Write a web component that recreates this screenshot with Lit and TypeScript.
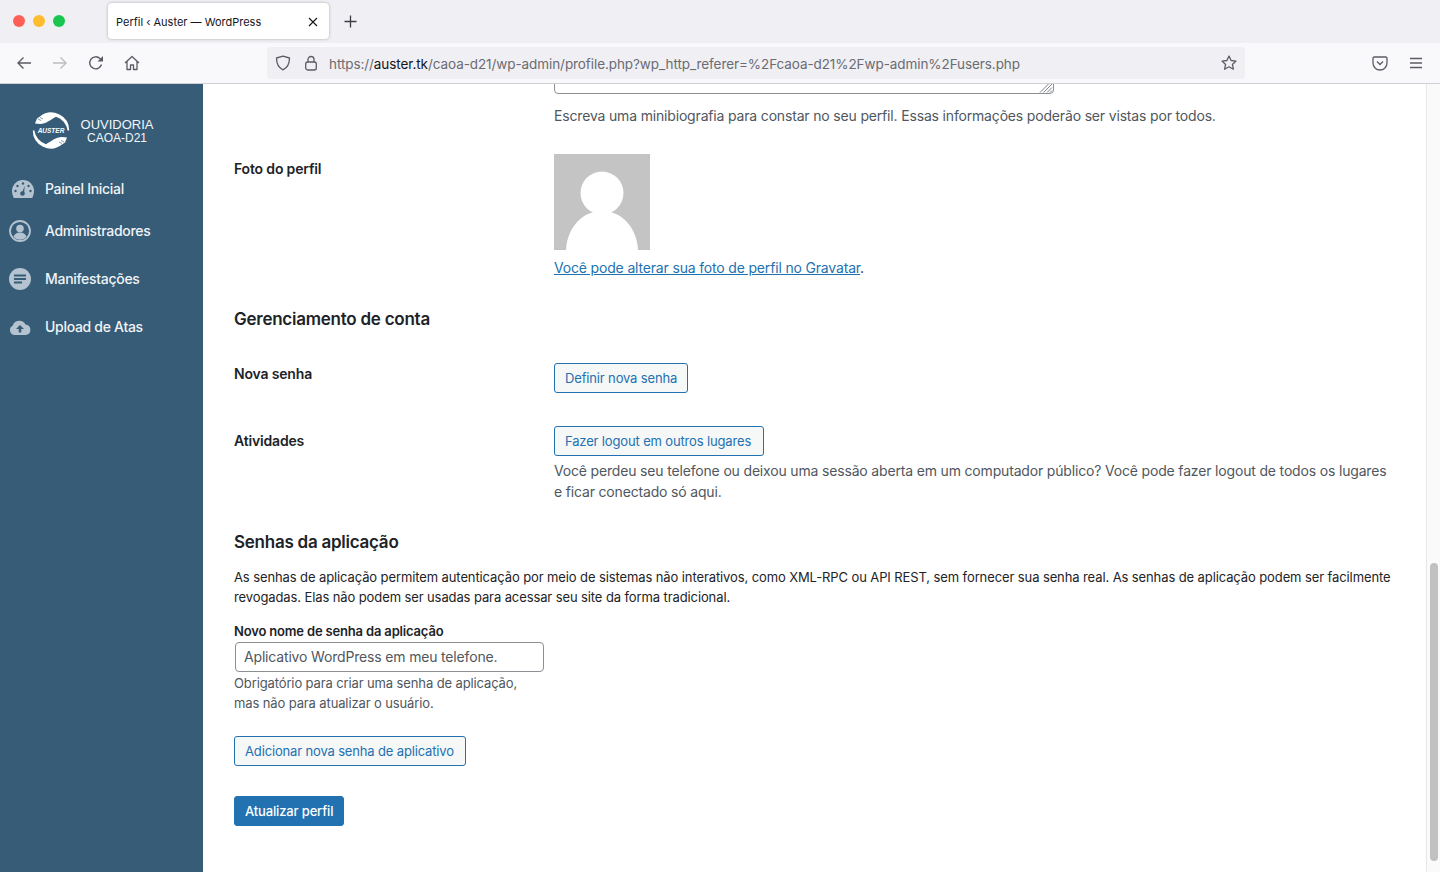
import { LitElement, html, css, svg } from "lit";
import { customElement } from "lit/decorators.js";

@customElement("app-root")
export class AppRoot extends LitElement {
  static styles = css`
    :host { display: block; width: 1440px; height: 872px; overflow: hidden; font-family: Inter, "Liberation Sans", Arial, sans-serif; background: #fff; color: #1d2327; }
    * { box-sizing: border-box; }
    svg { display: block; }

    .tabbar { height: 43px; background: #f0f0f4; display: flex; align-items: flex-start; }
    .lights { display: flex; gap: 8px; padding: 15px 0 0 13px; width: 108px; }
    .light { width: 12px; height: 12px; border-radius: 50%; }
    .tab { width: 221px; height: 36px; margin-top: 3px; background: #fff; border-radius: 4px; box-shadow: 0 0 3px rgba(0,0,0,.3); display: flex; align-items: center; justify-content: space-between; padding: 1px 11px 0 8px; font-size: 11px; color: #15141a; white-space: nowrap; }
    .newtab { margin: 15px 0 0 15px; }

    .toolbar { height: 41px; background: #f9f9fb; border-bottom: 1px solid #cfcfd8; display: flex; align-items: flex-start; }
    .nav { display: flex; width: 267px; padding: 12px 0 0 16px; gap: 20px; }
    .url { width: 978px; height: 32px; margin-top: 4px; background: #f0f0f4; border-radius: 4px; display: flex; align-items: center; padding: 0 8px; color: #6b6b72; white-space: nowrap; }
    .url .domain { color: #15141a; }
    .url .gap1 { margin-left: 12px; }
    .url .text { margin-left: 10px; padding-top: 2px; flex: 1; font-size: 13.5px; letter-spacing: -0.08px; }
    .right { display: flex; padding: 12px 0 0 127px; gap: 20px; }

    .body { display: flex; height: 789px; }
    .side { width: 203px; flex: none; background: #365c78; color: #fff; }
    .logo { display: flex; height: 90px; padding: 25px 0 0 31px; }
    .logotext { margin-left: 9px; padding-top: 9px; width: 74px; text-align: center; font-family: "Liberation Sans", Arial, sans-serif; font-size: 13px; line-height: 14px; color: #f4f6f8; }
    .logotext .sub { font-size: 12px; line-height: 13px; }
    .item { display: flex; align-items: center; padding-left: 9px; font-size: 14px; font-weight: 500; letter-spacing: -0.3px; color: #f0f3f5; height: 24px; }
    .item .ic { width: 36px; flex: none; }
    .item .gauge { padding-left: 3px; }
    .item .t { margin-bottom: 2px; }
    .i1 { margin-top: 3px; } .i2 { margin-top: 18px; } .i3 { margin-top: 24px; } .i4 { margin-top: 24px; }

    .main { flex: 1; overflow: hidden; padding-left: 31px; font-size: 14px; line-height: 21px; letter-spacing: -0.17px; }
    .scroll { width: 14px; flex: none; background: #fafafa; border-left: 1px solid #e8e8e8; position: relative; }
    .thumb { position: absolute; left: 3px; top: 479px; width: 8px; height: 298px; border-radius: 4px; background: #c1c1c1; }

    .row { display: grid; grid-template-columns: 320px 1fr; }
    .lab { font-weight: 600; color: #1d2327; }
    .bio { height: 50px; margin-top: -40px; width: 500px; border: 1px solid #8c8f94; border-radius: 4px; background: #fff; position: relative; }
    .grip { position: absolute; right: 0; bottom: 0; }
    .desc { color: #50575e; margin: 0; }
    .avatar { width: 96px; height: 96px; background: #c4c4c4; margin-top: 28px; }
    a { color: #2271b1; text-decoration: underline; }
    h2 { font-size: 17px; line-height: 24px; font-weight: 600; margin: 0; color: #1d2327; letter-spacing: -0.25px; }
    .btn { display: inline-block; height: 30px; line-height: 28px; padding: 0 10px; border: 1px solid #2271b1; border-radius: 3px; background: #f6f7f7; color: #2271b1; font-size: 13px; font-family: inherit; white-space: nowrap; letter-spacing: -0.15px; }
    .p13 { font-size: 13px; line-height: 20px; margin: 0; color: #1d2327; letter-spacing: -0.105px; }
    .flab { font-size: 13px; line-height: 19px; font-weight: 600; color: #1d2327; }
    .input { width: 309px; height: 30px; margin: 1px 0 0 1px; border: 1px solid #8c8f94; border-radius: 4px; padding: 0 8px; line-height: 28px; font-size: 14px; color: #50575e; background: #fff; }
    .hint { font-size: 13px; line-height: 20px; color: #50575e; margin: 1px 0 0; letter-spacing: -0.12px; }
    .primary { background: #2271b1; color: #fff; font-weight: 500; display: block; width: 110px; }
    .wide { display: block; width: 210px; }
    .addbtn { width: 232px; }
  `;

  private icon(w: number, h: number, vb: string, body: unknown) {
    return html`<svg width=${w} height=${h} viewBox=${vb}>${body}</svg>`;
  }

  render() {
    const stroke = "#5b5b66";
    const crescent = svg`<path d="M4 14.500L6 9.500 9 7.500A18 18 0 0 1 38.200 21.500L36.600 21.500A16.500 16.500 0 0 0 25 7.800C20 10.500 15 15 9 15z" fill="#fff"/>`;
    return html`
      <div class="tabbar">
        <div class="lights">
          <div class="light" style="background:#ff5f57"></div>
          <div class="light" style="background:#febc2e"></div>
          <div class="light" style="background:#19c650"></div>
        </div>
        <div class="tab">
          <span>Perfil ‹ Auster — WordPress</span>
          ${this.icon(10, 10, "0 0 10 10", svg`<path d="M1 1l8 8M9 1l-8 8" stroke="#15141a" stroke-width="1.1" fill="none"/>`)}
        </div>
        <div class="newtab">${this.icon(13, 13, "0 0 13 13", svg`<path d="M6.5 .5v12M.5 6.5h12" stroke="#3c3c44" stroke-width="1.3" fill="none"/>`)}</div>
      </div>

      <div class="toolbar">
        <div class="nav">
          ${this.icon(16, 16, "0 0 16 16", svg`<path d="M15 8H2M7.5 2.500L2 8l5.500 5.500" stroke=${stroke} stroke-width="1.400" fill="none"/>`)}
          ${this.icon(16, 16, "0 0 16 16", svg`<path d="M1 8h13M8.500 2.500L14 8l-5.500 5.500" stroke="#bdbdc2" stroke-width="1.400" fill="none"/>`)}
          ${this.icon(16, 16, "0 0 16 16", svg`<path d="M13.500 9.500A6 6 0 1 1 12 3.600L14 5.500" stroke=${stroke} stroke-width="1.400" fill="none"/><path d="M15 1v5.500H9.500z" fill=${stroke}/>`)}
          ${this.icon(16, 16, "0 0 16 16", svg`<path d="M1 8l7-6.500L15 8M3 6.500V14.500h3.500V10h3v4.500H13V6.500" stroke=${stroke} stroke-width="1.300" fill="none" stroke-linejoin="round"/>`)}
        </div>
        <div class="url">
          ${this.icon(16, 16, "0 0 16 16", svg`<path d="M8 1.200L14.500 3c0 6-1.500 9.500-6.500 11.800C3 12.500 1.500 9 1.500 3z" stroke=${stroke} stroke-width="1.300" fill="none" stroke-linejoin="round"/>`)}
          <span class="gap1">${this.icon(16, 16, "0 0 16 16", svg`<rect x="2.700" y="7" width="10.600" height="8" rx="2" stroke=${stroke} stroke-width="1.300" fill="none"/><path d="M5 7V4.500a3 3 0 0 1 6 0V7" stroke=${stroke} stroke-width="1.300" fill="none"/>`)}</span>
          <span class="text">https://<span class="domain">auster.tk</span>/caoa-d21/wp-admin/profile.php?wp_http_referer=%2Fcaoa-d21%2Fwp-admin%2Fusers.php</span>
          ${this.icon(16, 16, "0 0 16 16", svg`<path d="M8 1l2.100 4.500 4.900.6-3.600 3.300 1 4.800L8 11.800l-4.400 2.400 1-4.800L1 6.100l4.900-.6z" stroke=${stroke} stroke-width="1.300" fill="none" stroke-linejoin="round"/>`)}
        </div>
        <div class="right">
          ${this.icon(16, 16, "0 0 16 16", svg`<path d="M2.500 2h11A1.500 1.500 0 0 1 15 3.500V8a7 7 0 0 1-14 0V3.500A1.500 1.500 0 0 1 2.500 2z" stroke=${stroke} stroke-width="1.300" fill="none"/><path d="M5 6.500l3 3 3-3" stroke=${stroke} stroke-width="1.300" fill="none"/>`)}
          ${this.icon(16, 16, "0 0 16 16", svg`<path d="M2 3.500h12M2 8h12M2 12.500h12" stroke=${stroke} stroke-width="1.300" fill="none"/>`)}
        </div>
      </div>

      <div class="body">
        <div class="side">
          <div class="logo">
            ${this.icon(40, 42, "0 0 40 42", svg`
              ${crescent}
              <g transform="rotate(180 20 21.500)">${crescent}</g>
              <path d="M7 10l3 1.500M9 8.500l3 1.500" stroke="#365c78" stroke-width=".6" fill="none"/>
              <path d="M33 33l-3-1.500M31 34.500l-3-1.500" stroke="#365c78" stroke-width=".6" fill="none"/>
              <text x="20" y="24" text-anchor="middle" font-family="Liberation Sans, Arial, sans-serif" font-size="6.500" font-weight="700" font-style="italic" fill="#fff">AUSTER</text>`)}
            <div class="logotext"><div>OUVIDORIA</div><div class="sub">CAOA-D21</div></div>
          </div>
          <div class="item i1"><span class="ic gauge">${this.icon(22, 18, "0 0 22 18", svg`
            <path d="M11 0a11 11 0 0 1 11 11c0 2.500-.7 4.800-1.800 7H1.800C.7 15.800 0 13.500 0 11A11 11 0 0 1 11 0z" fill="#b4c3cf"/>
            <circle cx="11" cy="3.500" r="1.200" fill="#365c78"/><circle cx="5.500" cy="6" r="1.200" fill="#365c78"/><circle cx="16.500" cy="6" r="1.200" fill="#365c78"/><circle cx="3.500" cy="11" r="1.200" fill="#365c78"/><circle cx="18.500" cy="11" r="1.200" fill="#365c78"/>
            <path d="M12.800 5.500L10 13l2 .8z" fill="#365c78"/><circle cx="10.500" cy="13.500" r="2.300" fill="#365c78"/>`)}</span><span class="t">Painel Inicial</span></div>
          <div class="item i2"><span class="ic">${this.icon(22, 22, "0 0 22 22", svg`
            <circle cx="11" cy="11" r="10" stroke="#b4c3cf" stroke-width="1.800" fill="none"/>
            <circle cx="11" cy="8.500" r="3.800" fill="#b4c3cf"/>
            <path d="M4.500 17c.8-3 3-4.500 6.500-4.500s5.700 1.500 6.500 4.500A9 9 0 0 1 4.500 17z" fill="#b4c3cf"/>`)}</span><span class="t">Administradores</span></div>
          <div class="item i3"><span class="ic">${this.icon(22, 22, "0 0 22 22", svg`
            <circle cx="11" cy="11" r="11" fill="#b4c3cf"/>
            <path d="M5 7.500h12M5 11h12M5 14.500h8" stroke="#365c78" stroke-width="2" fill="none"/>`)}</span><span class="t">Manifestações</span></div>
          <div class="item i4"><span class="ic">${this.icon(22, 16, "0 0 22 16", svg`
            <path d="M5 16A5 5 0 0 1 3.600 6.700 7 7 0 0 1 16.500 5.500 5.300 5.300 0 0 1 17 16z" fill="#b4c3cf"/>
            <path d="M11 6l-4 4h2.700v3.500h2.600V10H15z" fill="#365c78"/>`)}</span><span class="t">Upload de Atas</span></div>
        </div>

        <div class="main">
          <div class="row">
            <div></div>
            <div>
              <div class="bio"><span class="grip">${this.icon(14, 11, "0 0 14 11", svg`<path d="M1 10.500L11 .5M4.500 10.500L13 2M8 10.500L13 5.500M11 10.500L13 8.500" stroke="#6f7378" stroke-width=".9" fill="none"/>`)}</span></div>
              <p class="desc" style="margin-top:11px">Escreva uma minibiografia para constar no seu perfil. Essas informações poderão ser vistas por todos.</p>
            </div>
          </div>

          <div class="row">
            <div class="lab" style="margin-top:32px">Foto do perfil</div>
            <div>
              <div class="avatar">${this.icon(96, 96, "0 0 96 96", svg`
                <circle cx="48" cy="39" r="21.500" fill="#fff"/>
                <path d="M12 96C13 74 28 57 48 57s35 17 36 39z" fill="#fff"/>`)}</div>
              <div style="margin-top:7px"><a>Você pode alterar sua foto de perfil no Gravatar</a>.</div>
            </div>
          </div>

          <h2 style="margin-top:29px">Gerenciamento de conta</h2>

          <div class="row" style="margin-top:33px">
            <div class="lab" style="margin-top:-1px">Nova senha</div>
            <div style="margin-top:-1px"><span class="btn">Definir nova senha</span></div>
          </div>

          <div class="row" style="margin-top:33px">
            <div class="lab" style="margin-top:4px">Atividades</div>
            <div>
              <span class="btn wide">Fazer logout em outros lugares</span>
              <p class="desc" style="margin-top:4px;width:850px">Você perdeu seu telefone ou deixou uma sessão aberta em um computador público? Você pode fazer logout de todos os lugares<br>e ficar conectado só aqui.</p>
            </div>
          </div>

          <h2 style="margin-top:28px">Senhas da aplicação</h2>
          <p class="p13" style="margin-top:13px">As senhas de aplicação permitem autenticação por meio de sistemas não interativos, como XML-RPC ou API REST, sem fornecer sua senha real. As senhas de aplicação podem ser facilmente<br>revogadas. Elas não podem ser usadas para acessar seu site da forma tradicional.</p>
          <div class="flab" style="margin-top:15px">Novo nome de senha da aplicação</div>
          <div class="input">Aplicativo WordPress em meu telefone.</div>
          <p class="hint">Obrigatório para criar uma senha de aplicação,<br>mas não para atualizar o usuário.</p>
          <div style="margin-top:23px"><span class="btn addbtn">Adicionar nova senha de aplicativo</span></div>
          <div class="btn primary" style="margin-top:30px">Atualizar perfil</div>
        </div>
        <div class="scroll"><div class="thumb"></div></div>
      </div>
    `;
  }
}
